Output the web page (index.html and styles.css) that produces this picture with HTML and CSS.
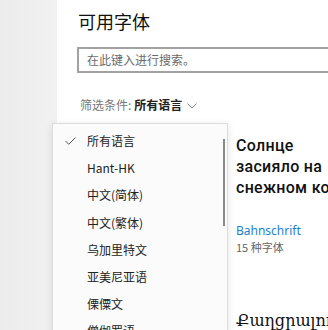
FILE: index.html
```html
<!DOCTYPE html>
<html lang="zh-CN">
<head>
<meta charset="utf-8">
<link rel="stylesheet" href="styles.css">
</head>
<body>
<div class="app">
  <aside class="sidebar"></aside>
  <main class="main">
    <h1 class="title">可用字体</h1>
    <div class="search">在此键入进行搜索。</div>
    <div class="filter">
      <span class="filter-label">筛选条件:</span>
      <span class="filter-value">所有语言</span>
      <svg class="chev" width="10" height="6" viewBox="0 0 10 6"><path d="M0.5 0.5 L5 5 L9.5 0.5" fill="none" stroke="#888" stroke-width="1"/></svg>
    </div>
    <div class="cards">
      <div class="card"></div>
      <div class="card">
        <div class="preview"><div class="pline">Солнце</div><div class="pline">засияло на</div><div class="pline">снежном ковре</div></div>
        <div class="font-name">Bahnschrift</div>
        <div class="font-count">15 种字体</div>
        <div class="preview2">Քաղցրալուր</div>
      </div>
    </div>
  </main>
  <div class="menu">
    <div class="item"><svg class="check" width="11" height="8" viewBox="0 0 11 8"><path d="M0.5 4 L3.8 7.3 L10.5 0.5" fill="none" stroke="#555" stroke-width="1"/></svg>所有语言</div>
    <div class="item">Hant-HK</div>
    <div class="item">中文(简体)</div>
    <div class="item">中文(繁体)</div>
    <div class="item">乌加里特文</div>
    <div class="item">亚美尼亚语</div>
    <div class="item">傈僳文</div>
    <div class="item">僧伽罗语</div>
    <div class="scroll"></div>
  </div>
</div>
</body>
</html>
```
FILE: styles.css
```css
html, body {
  margin: 0;
  padding: 0;
  background: #fff;
  overflow: hidden;
}
body {
  width: 328px;
  height: 330px;
  font-family: "Noto Sans CJK SC", "Noto Sans", sans-serif;
  color: #1a1a1a;
}
.app {
  display: flex;
  height: 330px;
  position: relative;
  overflow: hidden;
}
.sidebar {
  width: 57px;
  flex: none;
  background: linear-gradient(90deg, #ececec, #f1f1f1);
}
.main {
  flex: 1;
  min-width: 0;
  padding-left: 20px;
  overflow: hidden;
}
.title {
  margin: 8px 0 0 1px;
  font-size: 18px;
  font-weight: 400;
  line-height: 26px;
  color: #111;
}
.search {
  margin-top: 13px;
  width: 300px;
  height: 22px;
  border: 2px solid #a2a2a2;
  font-size: 12px;
  line-height: 22px;
  color: #6a6a6a;
  padding-left: 8px;
  box-sizing: content-box;
}
.filter {
  margin-top: 24px;
  margin-left: 3px;
  display: flex;
  align-items: center;
  font-size: 12px;
  line-height: 16px;
  height: 16px;
}
.filter-label {
  color: #777;
}
.filter-value {
  margin-left: 3px;
  font-weight: 700;
  color: #222;
}
.chev {
  margin-left: 5px;
  margin-top: 1px;
}
.cards {
  display: grid;
  grid-template-columns: 148px 160px;
  column-gap: 3px;
  margin-top: 20px;
}
.card {
  padding: 0 0 0 8px;
  min-width: 0;
}
.preview {
  font-family: "Roboto", "Noto Sans", sans-serif;
  font-size: 16px;
  font-weight: 500;
  line-height: 21px;
  color: #111;
  margin-top: 2px;
}
.pline {
  white-space: nowrap;
  letter-spacing: 0.3px;
}
.font-name {
  margin-top: 25px;
  font-family: "Noto Sans", sans-serif;
  font-size: 12px;
  line-height: 15px;
  color: #1a7fd4;
}
.font-count {
  margin-top: 2px;
  font-size: 11px;
  line-height: 15px;
  color: #666;
}
.preview2 {
  margin-top: 56px;
  font-family: "DejaVu Serif", serif;
  font-size: 16px;
  line-height: 20px;
  color: #111;
  white-space: nowrap;
}
.menu {
  position: absolute;
  left: 52px;
  top: 123px;
  width: 176px;
  height: 220px;
  background: #fbfbfb;
  border: 1px solid #dcdcdc;
  box-shadow: 0 2px 8px rgba(0,0,0,0.10);
  padding-top: 3px;
  box-sizing: border-box;
}
.item {
  position: relative;
  height: 27.2px;
  line-height: 27px;
  padding-left: 34px;
  font-size: 12px;
  color: #222;
  white-space: nowrap;
}
.check {
  position: absolute;
  left: 12px;
  top: 10px;
}
.scroll {
  position: absolute;
  right: 2px;
  top: 15px;
  width: 2px;
  height: 87px;
  background: #8a8a8a;
}
```
